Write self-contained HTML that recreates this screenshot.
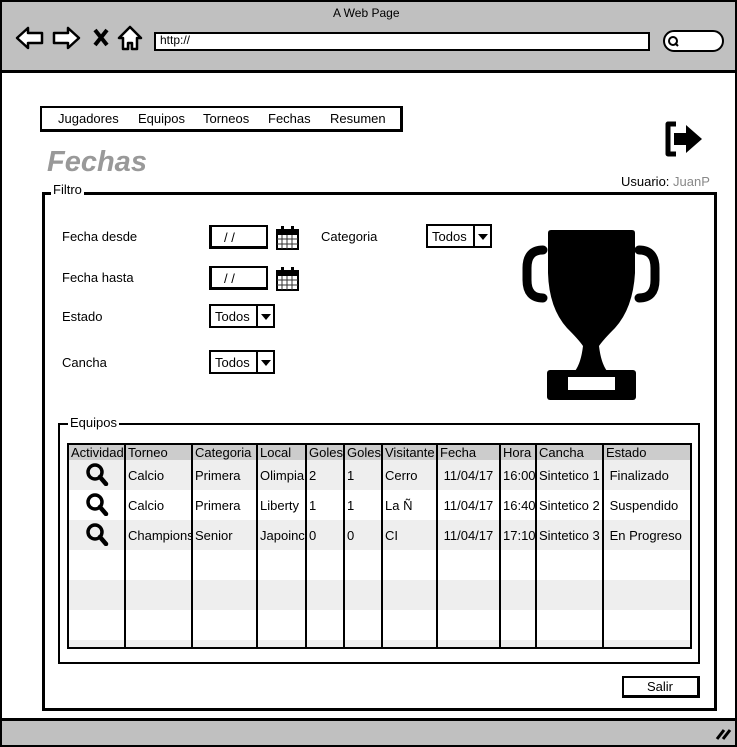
<!DOCTYPE html>
<html><head><meta charset="utf-8"><style>
*{margin:0;padding:0;box-sizing:border-box}
body{width:737px;height:747px;position:relative;background:#fff;font-family:"Liberation Sans",sans-serif;font-size:13px;color:#000;overflow:hidden}
.a{position:absolute}
.box{position:absolute;border:2px solid #000}
.t{position:absolute;white-space:nowrap}
.sel{position:absolute;border:2px solid #000;height:24px;background:#fff}
.sel span{position:absolute;left:4px;top:3px}
.sel i{position:absolute;right:0;top:0;width:17px;height:100%;border-left:2px solid #000}
.sel i:after{content:"";position:absolute;left:3px;top:8px;border-left:5px solid transparent;border-right:5px solid transparent;border-top:6px solid #000}
.inp{position:absolute;border:2px solid #000;border-width:2px 2px 3px 3px;width:59px;height:24px;padding:3px 12px;font-size:13px}
.lg{background:#fff;padding:0 2px}
td{border-right:2px solid #000;padding:0 2px;font-size:13px;height:30px;white-space:nowrap;overflow:hidden;max-width:0}
tr.h td{height:15px;background:#ccc;line-height:14px}
tr:nth-child(even) td{background:#eee}
</style></head><body>
<div class="a" style="left:0;top:0;width:737px;height:747px;border:2px solid #000"></div>
<div class="a" style="left:0;top:0;width:737px;height:73px;background:#c0c0c0;border:2px solid #000;border-bottom:3px solid #000"></div>
<div class="t" style="left:333px;top:6px;font-size:12px">A Web Page</div>
<svg class="a" style="left:14px;top:24px" width="130" height="28" viewBox="0 0 130 28">
<path d="M3 14 L14 4 V9 H28 V19 H14 V24 Z" fill="#fff" stroke="#000" stroke-width="2.5" stroke-linejoin="round"/>
<path d="M65 14 L54 4 V9 H40 V19 H54 V24 Z" fill="#fff" stroke="#000" stroke-width="2.5" stroke-linejoin="round"/>
<path d="M81 6 L93 21 M93 6 L81 21" stroke="#000" stroke-width="4"/>
<path d="M116 3 L105 14 H109 V25 H114 V19 H118 V25 H123 V14 H127 Z" fill="#fff" stroke="#000" stroke-width="2.5" stroke-linejoin="round"/>
</svg>
<div class="a" style="left:154px;top:32px;width:496px;height:19px;background:#fff;border:2px solid #000"></div>
<div class="t" style="left:160px;top:33px;font-size:12px">http://</div>
<div class="a" style="left:663px;top:30px;width:61px;height:22px;background:#fff;border:2px solid #000;border-radius:11px"></div>
<svg class="a" style="left:667px;top:35px" width="14" height="13"><circle cx="6" cy="6" r="4" fill="none" stroke="#000" stroke-width="2"/><path d="M8 8 L11 11" stroke="#000" stroke-width="2"/></svg>
<div class="a" style="left:0;top:718px;width:737px;height:29px;background:#c0c0c0;border:2px solid #000;border-top:3px solid #000"></div>
<svg class="a" style="left:713px;top:725px" width="20" height="16"><path d="M4 14 L11 5 M10 14 L17 5" stroke="#000" stroke-width="3"/></svg>

<div class="box" style="left:40px;top:106px;width:363px;height:26px;border-width:2px 3px 3px 2px"></div>
<div class="t" style="left:58px;top:111px">Jugadores</div>
<div class="t" style="left:138px;top:111px">Equipos</div>
<div class="t" style="left:203px;top:111px">Torneos</div>
<div class="t" style="left:268px;top:111px">Fechas</div>
<div class="t" style="left:330px;top:111px">Resumen</div>
<div class="t" style="left:47px;top:146px;font-size:29px;font-weight:bold;font-style:italic;color:#999">Fechas</div>
<svg class="a" style="left:664px;top:121px" width="44" height="36"><path d="M12 3 H4 V33 H12" fill="none" stroke="#000" stroke-width="5" stroke-linejoin="round"/><path d="M10 12 H22 V4 L38 18 L22 32 V24 H10 Z" fill="#000"/></svg>
<div class="t" style="left:621px;top:174px">Usuario: <span style="color:#888">JuanP</span></div>

<div class="box" style="left:42px;top:192px;width:675px;height:519px;border-width:3px"></div>
<div class="t lg" style="left:51px;top:182px">Filtro</div>
<div class="t" style="left:62px;top:229px">Fecha desde</div>
<div class="t" style="left:62px;top:270px">Fecha hasta</div>
<div class="t" style="left:62px;top:309px">Estado</div>
<div class="t" style="left:62px;top:355px">Cancha</div>
<div class="t" style="left:321px;top:229px">Categoria</div>
<div class="inp" style="left:209px;top:225px">/ /</div>
<div class="inp" style="left:209px;top:266px">/ /</div>
<svg class="a" style="left:276px;top:225px" width="23" height="25"><rect x="1" y="5" width="21" height="19" fill="#fff" stroke="#000" stroke-width="2"/><rect x="1" y="5" width="21" height="5" fill="#000"/><path d="M1 14 H22 M1 19 H22 M6 10 V24 M11 10 V24 M16 10 V24" stroke="#333" stroke-width="1"/><rect x="5" y="1" width="3" height="6" fill="#000"/><rect x="15" y="1" width="3" height="6" fill="#000"/></svg>
<svg class="a" style="left:276px;top:266px" width="23" height="25"><rect x="1" y="5" width="21" height="19" fill="#fff" stroke="#000" stroke-width="2"/><rect x="1" y="5" width="21" height="5" fill="#000"/><path d="M1 14 H22 M1 19 H22 M6 10 V24 M11 10 V24 M16 10 V24" stroke="#333" stroke-width="1"/><rect x="5" y="1" width="3" height="6" fill="#000"/><rect x="15" y="1" width="3" height="6" fill="#000"/></svg>
<div class="sel" style="left:426px;top:224px;width:66px"><span>Todos</span><i></i></div>
<div class="sel" style="left:209px;top:304px;width:66px"><span>Todos</span><i></i></div>
<div class="sel" style="left:209px;top:350px;width:66px"><span>Todos</span><i></i></div>
<svg class="a" style="left:515px;top:228px" width="152" height="175">
<path d="M36 2 H117 Q120 2 120 5 V45 Q118 80 100 100 Q88 112 84 118 Q86 135 92 143 H60 Q66 135 68 118 Q64 112 52 100 Q34 80 33 45 V5 Q33 2 36 2 Z" fill="#000"/>
<path d="M28 22 Q12 22 12 40 V52 Q12 70 28 70" fill="none" stroke="#000" stroke-width="9" stroke-linecap="round"/>
<path d="M124 22 Q140 22 140 40 V52 Q140 70 124 70" fill="none" stroke="#000" stroke-width="9" stroke-linecap="round"/>
<rect x="32" y="142" width="89" height="30" rx="3" fill="#000"/>
<rect x="53" y="149" width="47" height="13" fill="#fff"/>
</svg>

<div class="box" style="left:58px;top:423px;width:642px;height:241px"></div>
<div class="t lg" style="left:68px;top:415px">Equipos</div>
<div class="a" style="left:67px;top:443px;width:625px;height:206px;border:2px solid #000;overflow:hidden">
<table style="border-collapse:collapse;table-layout:fixed;width:623px">
<colgroup><col style="width:56px"><col style="width:67px"><col style="width:65px"><col style="width:49px"><col style="width:38px"><col style="width:38px"><col style="width:55px"><col style="width:63px"><col style="width:36px"><col style="width:67px"><col style="width:89px"></colgroup>
<tr class="h"><td>Actividad</td><td>Torneo</td><td>Categoria</td><td>Local</td><td>Goles</td><td>Goles</td><td>Visitante</td><td>Fecha</td><td>Hora</td><td>Cancha</td><td style="border-right:0">Estado</td></tr>
<tr><td style="text-align:center"><svg width="26" height="24"><circle cx="11" cy="10" r="7" fill="none" stroke="#000" stroke-width="3.5"/><path d="M16 15 L22 22" stroke="#000" stroke-width="4.5" stroke-linecap="round"/></svg></td><td>Calcio</td><td>Primera</td><td>Olimpia</td><td>2</td><td>1</td><td>Cerro</td><td>&nbsp;11/04/17</td><td>16:00</td><td>Sintetico 1</td><td style="border-right:0">&nbsp;Finalizado</td></tr>
<tr><td style="text-align:center"><svg width="26" height="24"><circle cx="11" cy="10" r="7" fill="none" stroke="#000" stroke-width="3.5"/><path d="M16 15 L22 22" stroke="#000" stroke-width="4.5" stroke-linecap="round"/></svg></td><td>Calcio</td><td>Primera</td><td>Liberty</td><td>1</td><td>1</td><td>La Ñ</td><td>&nbsp;11/04/17</td><td>16:40</td><td>Sintetico 2</td><td style="border-right:0">&nbsp;Suspendido</td></tr>
<tr><td style="text-align:center"><svg width="26" height="24"><circle cx="11" cy="10" r="7" fill="none" stroke="#000" stroke-width="3.5"/><path d="M16 15 L22 22" stroke="#000" stroke-width="4.5" stroke-linecap="round"/></svg></td><td>Champions</td><td>Senior</td><td>Japoinc</td><td>0</td><td>0</td><td>CI</td><td>&nbsp;11/04/17</td><td>17:10</td><td>Sintetico 3</td><td style="border-right:0">&nbsp;En Progreso</td></tr>
<tr><td></td><td></td><td></td><td></td><td></td><td></td><td></td><td></td><td></td><td></td><td style="border-right:0"></td></tr>
<tr><td></td><td></td><td></td><td></td><td></td><td></td><td></td><td></td><td></td><td></td><td style="border-right:0"></td></tr>
<tr><td></td><td></td><td></td><td></td><td></td><td></td><td></td><td></td><td></td><td></td><td style="border-right:0"></td></tr>
<tr><td></td><td></td><td></td><td></td><td></td><td></td><td></td><td></td><td></td><td></td><td style="border-right:0"></td></tr>
</table></div>

<div class="box" style="left:622px;top:676px;width:78px;height:22px;border-width:2px 3px 3px 2px"></div>
<div class="t" style="left:647px;top:679px">Salir</div>
</body></html>
